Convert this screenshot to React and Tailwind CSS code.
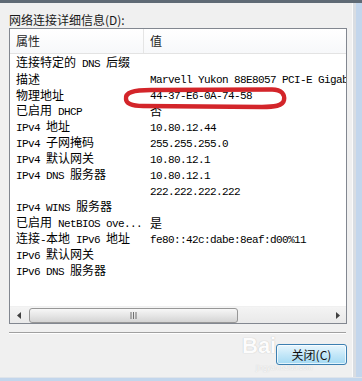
import React from "react";

const CJK = /[\u3000-\u9fff\uff00-\uffef]/;

function T({ text }) {
  const runs = [];
  let cur = "";
  let curCjk = null;
  for (const ch of text) {
    const c = CJK.test(ch);
    if (curCjk === null || c === curCjk) {
      cur += ch;
      curCjk = c;
    } else {
      runs.push([cur, curCjk]);
      cur = ch;
      curCjk = c;
    }
  }
  if (cur) runs.push([cur, curCjk]);
  return (
    <>
      {runs.map(([s, c], i) =>
        c ? (
          <span key={i} className="font-['Noto_Sans_CJK_SC',sans-serif] text-[12px] leading-[16px]">
            {s}
          </span>
        ) : (
          <span
            key={i}
            className="font-['Liberation_Mono',monospace] text-[11px] leading-[16px] tracking-[-0.6px] whitespace-pre"
          >
            {s}
          </span>
        )
      )}
    </>
  );
}

const rows = [
  ["连接特定的 DNS 后缀", ""],
  ["描述", "Marvell Yukon 88E8057 PCI-E Gigabit Ethernet Controller"],
  ["物理地址", "44-37-E6-0A-74-58"],
  ["已启用 DHCP", "否"],
  ["IPv4 地址", "10.80.12.44"],
  ["IPv4 子网掩码", "255.255.255.0"],
  ["IPv4 默认网关", "10.80.12.1"],
  ["IPv4 DNS 服务器", "10.80.12.1"],
  ["", "222.222.222.222"],
  ["IPv4 WINS 服务器", ""],
  ["已启用 NetBIOS ove...", "是"],
  ["连接-本地 IPv6 地址", "fe80::42c:dabe:8eaf:d00%11"],
  ["IPv6 默认网关", ""],
  ["IPv6 DNS 服务器", ""],
];

export default function App() {
  return (
    <div className="w-[362px] h-[381px] flex flex-col bg-[#f0f0f0] overflow-hidden text-black">
      <div className="h-[3px] bg-[#5f6a75] shrink-0" />
      <div className="flex flex-1 min-h-0">
        <div className="w-[352px] shrink-0 min-w-0 flex flex-col pl-[9px] relative">
          <div className="pt-[9px] h-[25px] leading-[16px] font-['Noto_Sans_CJK_SC',sans-serif] text-[12px] text-[#1a1a1a]">
            网络连接详细信息(D):
          </div>
          <div className="relative w-[338px] h-[296px] border border-[#828790] bg-white flex flex-col overflow-hidden">
            <div className="h-[25px] shrink-0 flex border-b border-[#e3e3e3] bg-gradient-to-b from-white to-[#f7f8fa] font-['Noto_Sans_CJK_SC',sans-serif] text-[12px] leading-[24px] text-[#1e1e1e]">
              <div className="w-[134px] pl-[6px] border-r border-[#e5e5e5]">属性</div>
              <div className="pl-[6px]">值</div>
            </div>
            <div className="flex-1 flex flex-col whitespace-nowrap overflow-hidden min-w-0">
              {rows.map(([k, v], i) => (
                <div key={i} className="h-[16px] leading-[16px] flex items-center shrink-0">
                  <div className="w-[140px] pl-[6px] shrink-0 overflow-hidden">
                    <T text={k} />
                  </div>
                  <div className="shrink-0">
                    <T text={v} />
                  </div>
                </div>
              ))}
            </div>
            <div className="h-[17px] shrink-0 flex items-center bg-gradient-to-b from-[#f4f4f4] to-[#e9e9e9] border-t border-[#f0f0f0]">
              <div className="w-[18px] h-full flex items-center justify-center">
                <svg width="5" height="7" viewBox="0 0 5 7">
                  <path d="M4 0 L0 3.5 L4 7 Z" fill="#404040" />
                </svg>
              </div>
              <div className="ml-[1px] w-[209px] h-[15px] rounded-[3px] border border-[#979797] bg-gradient-to-b from-[#f7f7f7] via-[#e6e6e6] to-[#d4d4d4] flex items-center justify-center">
                <svg width="7" height="7" viewBox="0 0 7 7">
                  <path d="M1 0 V7 M3.5 0 V7 M6 0 V7" stroke="#6f6f6f" strokeWidth="1" />
                </svg>
              </div>
              <div className="flex-1" />
              <div className="w-[18px] h-full flex items-center justify-center">
                <svg width="5" height="7" viewBox="0 0 5 7">
                  <path d="M1 0 L5 3.5 L1 7 Z" fill="#404040" />
                </svg>
              </div>
            </div>
            <svg
              className="absolute left-[111px] top-[57px]"
              width="168"
              height="26"
              viewBox="0 0 168 26"
            >
              <path
                d="M5 13 C4 6.5, 12 4, 30 4 L151 3.5 C161 3.5, 164 8.5, 163 14 C162 20, 153 21, 141 21 L22 20 C10 20, 5 17, 5 13 Z"
                fill="none"
                stroke="#d3252a"
                strokeWidth="4.4"
              />
            </svg>
          </div>
          <div className="mt-[8px] w-[337px] h-[2px] border-t border-[#a0a0a0] border-b border-b-white" />
          <div className="mt-[10px] w-[338px] flex justify-end">
            <div className="w-[71px] h-[21px] rounded-[3px] border border-[#3c7fb1] bg-gradient-to-b from-[#e8f6fd] via-[#c4e7f8] to-[#a3d9f3] shadow-[inset_0_0_0_1px_rgba(255,255,255,0.7)] flex items-center justify-center font-['Noto_Sans_CJK_SC',sans-serif] text-[12px] leading-none text-[#111]">
              关闭(C)
            </div>
          </div>
          <div className="absolute left-[242px] top-[331px] flex flex-col items-start pointer-events-none">
            <div className="font-['Liberation_Sans',sans-serif] font-bold text-[22px] leading-[24px] text-white opacity-80 [text-shadow:0_0_1px_rgba(120,120,120,0.6)]">
              Bai
            </div>
            <div className="font-['Liberation_Sans',sans-serif] text-[7px] leading-[8px] text-white opacity-70 [text-shadow:0_0_1px_rgba(120,120,120,0.5)] ml-[14px] mt-[6px]">
              jingyan.baidu.com
            </div>
          </div>
        </div>
        <div className="w-[10px] flex shrink-0">
          <div className="w-[1px] bg-[#fbfbfb]" />
          <div className="w-[3px] bg-[#d9dde2]" />
          <div className="flex-1 bg-[#c3d6ec]" />
        </div>
      </div>
      <div className="h-[4px] shrink-0 bg-[#c3d6ec] border-t border-[#dfe4ea]" />
    </div>
  );
}
